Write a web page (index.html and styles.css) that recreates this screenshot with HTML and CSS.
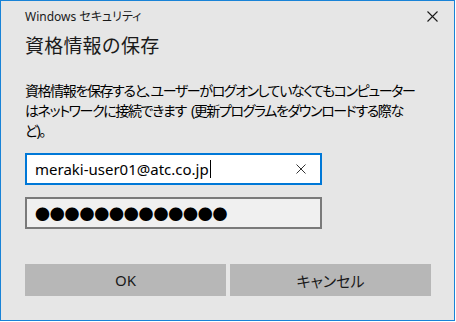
FILE: index.html
```html
<!DOCTYPE html>
<html lang="ja">
<head>
  <meta charset="UTF-8" />
  <title>Windows セキュリティ</title>
  <link rel="stylesheet" href="styles.css">
</head>
<body>
  <div class="window">
    <div class="titlebar">
      <span class="app-name">Windows セキュリティ</span>
      <span class="close">
        <svg width="11" height="11" viewBox="0 0 11 11">
          <path d="M0.5 0.5 L10.5 10.5 M10.5 0.5 L0.5 10.5" stroke="#1a1a1a" stroke-width="1.1" fill="none"/>
        </svg>
      </span>
    </div>

    <h1>資格情報の保存</h1>
    <p class="desc">資格情報を保存すると、ユーザーがログオンしていなくてもコンピューター<br>はネットワークに接続できます (更新プログラムをダウンロードする際な<br>ど)。</p>

    <div class="field active">
      <span class="value">meraki-user01@atc.co.jp</span><span class="caret"></span>
      <span class="clear">
        <svg width="10" height="10" viewBox="0 0 10 10">
          <path d="M0.5 0.5 L9.5 9.5 M9.5 0.5 L0.5 9.5" stroke="#333" stroke-width="1" fill="none"/>
        </svg>
      </span>
    </div>
    <div class="field password">
      <span class="dots">●●●●●●●●●●●●●</span>
    </div>

    <div class="buttons">
      <button class="btn">OK</button>
      <button class="btn">キャンセル</button>
    </div>
  </div>
</body>
</html>
```

FILE: styles.css
```css
body {
  margin: 0;
  background: #ffffff;
  font-family: "Noto Sans", "Noto Sans CJK JP", sans-serif;
  color: #000;
}

.window {
  width: 455px;
  height: 321px;
  box-sizing: border-box;
  border: 1px solid #1883d7;
  background: #e6e6e6;
  padding: 0 24px;
}

.titlebar {
  height: 30px;
  display: flex;
  align-items: center;
  justify-content: space-between;
  margin-right: -8px;
}

.app-name {
  font-size: 12px;
  color: #1a1a1a;
  font-feature-settings: "palt";
}

.close {
  display: flex;
  width: 11px;
  height: 11px;
}

h1 {
  margin: 0;
  font-family: "Noto Sans CJK JP", sans-serif;
  font-weight: normal;
  font-size: 19px;
  letter-spacing: 0.2px;
  line-height: 28px;
  color: #1a1a1a;
}

.desc {
  margin: 22px 0 0;
  font-family: "Noto Sans", "Noto Sans CJK JP", sans-serif;
  font-size: 14px;
  letter-spacing: -1.4px;
  word-spacing: 3px;
  line-height: 20px;
  font-feature-settings: "palt";
  white-space: nowrap;
}

.field {
  width: 297px;
  height: 32px;
  box-sizing: border-box;
  border: 2px solid #7a7a7a;
  background: #f0f0f0;
  margin-top: 12px;
  display: flex;
  align-items: center;
  padding: 0 8px;
}

.field.active {
  margin-top: 12px;
  border-color: #0078d7;
  background: #ffffff;
}

.value {
  font-size: 15px;
}

.caret {
  width: 1px;
  height: 18px;
  background: #000;
  margin-left: 1px;
}

.clear {
  display: flex;
  margin-left: auto;
  margin-right: 6px;
}

.dots {
  font-family: "Noto Sans CJK JP", sans-serif;
  font-size: 15px;
  letter-spacing: -0.2px;
}

.buttons {
  display: flex;
  gap: 4px;
  margin-top: 35px;
  width: 406px;
}

.btn {
  flex: 1;
  height: 32px;
  border: none;
  background: #b7b7b7;
  font-family: "Noto Sans", "Noto Sans CJK JP", sans-serif;
  font-size: 15px;
  color: #1a1a1a;
  font-feature-settings: "palt";
}
```
